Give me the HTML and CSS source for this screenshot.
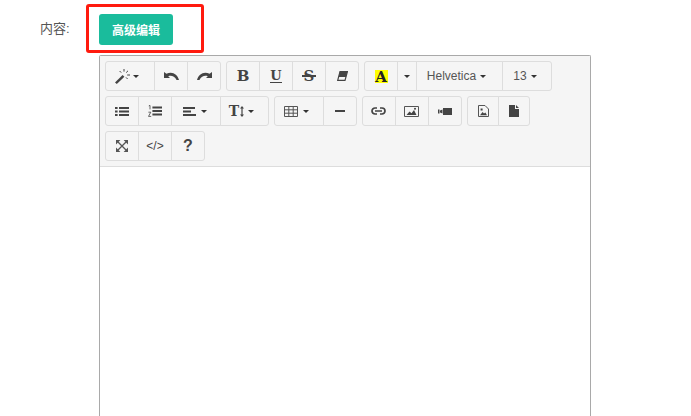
FILE: index.html
```html
<!DOCTYPE html>
<html lang="zh-CN">
<head>
    <meta charset="UTF-8">
    <title>高级编辑</title>
    <link rel="stylesheet" href="styles.css">
</head>
<body>
    <div class="form-row">
        <label class="form-label">内容:</label>
        <div class="form-field">
            <div class="btn-line">
                <button class="btn-primary">高级编辑</button>
            </div>
            <div class="editor">
                <div class="toolbar">
                    <div class="tool-row">
                        <div class="btn-group">
                            <button class="tool w49 nudge">
                                <svg width="15" height="15" viewBox="0 0 15 15"><path d="M0 13.4 L7.6 6 L9.4 7.8 L1.8 15 Z" fill="#444"/><path d="M9 0v2.6M13 1.8l-1.8 1.8M15 6h-2.8M4.6 2l1.6 1.6M12.6 10l-1.6-1.6" stroke="#444" stroke-width="1" fill="none"/></svg>
                                <span class="caret"></span>
                            </button>
                            <button class="tool">
                                <svg width="15" height="8" viewBox="0 0 15 8"><path d="M0 0 V6 H6 L4.2 4.2 C7 3 10.5 4 12.6 8 L15 8 C13.4 2 8 -1.2 2.4 1.8 Z" fill="#444"/></svg>
                            </button>
                            <button class="tool">
                                <svg width="15" height="8" viewBox="0 0 15 8"><path d="M15 0 V6 H9 L10.8 4.2 C8 3 4.5 4 2.4 8 L0 8 C1.6 2 7 -1.2 12.6 1.8 Z" fill="#444"/></svg>
                            </button>
                        </div>
                        <div class="btn-group">
                            <button class="tool"><span class="glyph-serif">B</span></button>
                            <button class="tool"><span class="glyph-under">U</span></button>
                            <button class="tool"><span class="glyph-strike">S</span></button>
                            <button class="tool">
                                <svg width="11" height="10" viewBox="0 0 11 10"><path d="M3 .6 H10.4 L8 9.4 H.7 Z" fill="none" stroke="#444" stroke-width="1.2"/><path d="M3 .6 H10.4 L9 6 H1.6 Z" fill="#444"/></svg>
                            </button>
                        </div>
                        <div class="btn-group">
                            <button class="tool"><span class="glyph-color">A</span></button>
                            <button class="tool w19"><span class="caret caret-solo"></span></button>
                            <button class="tool w86 nudge">Helvetica <span class="caret caret-text"></span></button>
                            <button class="tool w49 nudge-s">13 <span class="caret caret-text"></span></button>
                        </div>
                    </div>
                    <div class="tool-row">
                        <div class="btn-group">
                            <button class="tool">
                                <svg width="14" height="9" viewBox="0 0 14 9"><path d="M0 0h2.6v2H0zM0 3.5h2.6v2H0zM0 7h2.6v2H0zM4 0H14v2H4zM4 3.5H14v2H4zM4 7H14v2H4z" fill="#444"/></svg>
                            </button>
                            <button class="tool">
                                <svg width="14" height="12" viewBox="0 0 14 12"><path d="M4.4 1.6H14v2H4.4zM4.4 5H14v2H4.4zM4.4 8.4H14v2H4.4z" fill="#444"/><path d="M.8 .9l1.2-.5v4M.4 7.2h2.4L.5 11.4h2.7" fill="none" stroke="#444" stroke-width=".8"/></svg>
                            </button>
                            <button class="tool w49 nudge-xs">
                                <svg width="13" height="9" viewBox="0 0 13 9"><path d="M0 0h12v2H0zM0 3.5h8v2H0zM0 7h13v2H0z" fill="#444"/></svg>
                                <span class="caret caret-wide"></span>
                            </button>
                            <button class="tool w48 nudge">
                                <span class="glyph-size">T</span>
                                <svg class="size-arrow" width="4" height="11" viewBox="0 0 4 11"><path d="M2 0 L4 2.4H2.6V8.6H4L2 11 0 8.6H1.4V2.4H0Z" fill="#444"/></svg>
                                <span class="caret"></span>
                            </button>
                        </div>
                        <div class="btn-group">
                            <button class="tool w49 nudge">
                                <svg width="14" height="11" viewBox="0 0 14 11"><path d="M.5 .5h13v10H.5zM.5 3.8h13M.5 7.2h13M4.8 .5v10M9.2 .5v10" fill="none" stroke="#555" stroke-width="1"/></svg>
                                <span class="caret caret-wide"></span>
                            </button>
                            <button class="tool">
                                <svg width="10" height="2" viewBox="0 0 10 2"><path d="M0 0h10v2H0z" fill="#444"/></svg>
                            </button>
                        </div>
                        <div class="btn-group">
                            <button class="tool nudge-xs">
                                <svg width="15" height="8" viewBox="0 0 15 8"><path d="M6 1H4a3 3 0 0 0 0 6h2M9 1h2a3 3 0 0 1 0 6H9M4 4h7" fill="none" stroke="#444" stroke-width="1.7"/></svg>
                            </button>
                            <button class="tool nudge-xs">
                                <svg width="15" height="11" viewBox="0 0 15 11"><path d="M.5 .5h14v10H.5z" fill="none" stroke="#555" stroke-width="1"/><path d="M2.5 9 L5.5 5.5 L7.5 7.2 L10 4 L12.5 9 Z" fill="#444"/><circle cx="11" cy="2.8" r="1" fill="#444"/></svg>
                            </button>
                            <button class="tool">
                                <svg width="14" height="7" viewBox="0 0 14 7"><path d="M5 0h9v7H5zM0 1.6h1.5v3.8H0zM2 2.6l2.5-1v3.8L2 4.4z" fill="#444"/></svg>
                            </button>
                        </div>
                        <div class="btn-group">
                            <button class="tool w31">
                                <svg width="11" height="12" viewBox="0 0 11 12"><path d="M.5 .5h6.5l3.5 3.5v7.5H.5z" fill="none" stroke="#555" stroke-width="1"/><path d="M2 10.2 L4.6 7 L6 8.5 L7.4 7.4 L9 10.2Z M2.6 3.6h2v2h-2z" fill="#444"/></svg>
                            </button>
                            <button class="tool w31">
                                <svg width="10" height="12" viewBox="0 0 10 12"><path d="M0 0h6v4h4v8H0zM7 0l3 3H7z" fill="#444"/></svg>
                            </button>
                        </div>
                    </div>
                    <div class="tool-row">
                        <div class="btn-group">
                            <button class="tool">
                                <svg width="12" height="12" viewBox="0 0 12 12"><path d="M0 0h4.4L0 4.4zM12 0v4.4L7.6 0zM0 12V7.6L4.4 12zM12 12H7.6L12 7.6z" fill="#555"/><path d="M2 2l8 8M10 2l-8 8" stroke="#555" stroke-width="1.3" fill="none"/></svg>
                            </button>
                            <button class="tool"><span class="glyph-code">&lt;/&gt;</span></button>
                            <button class="tool"><span class="glyph-help">?</span></button>
                        </div>
                    </div>
                </div>
            </div>
        </div>
    </div>
    <div class="highlight"></div>
</body>
</html>
```

FILE: styles.css
```css
body {
    margin: 0;
    background: #fff;
    color: #333;
    font-family: "Liberation Sans", "Noto Sans CJK SC", sans-serif;
    font-size: 13px;
    height: 416px;
    overflow: hidden;
    position: relative;
}

.form-row {
    display: flex;
    height: 416px;
    overflow: hidden;
}

.form-label {
    width: 99px;
    box-sizing: border-box;
    padding: 21px 0 0 40px;
    font-size: 13px;
    line-height: 16px;
    color: #555;
}

.form-field {
    width: 492px;
}

.btn-line {
    padding-top: 14px;
    height: 55px;
    box-sizing: border-box;
}

.btn-primary {
    display: block;
    width: 74px;
    height: 31px;
    padding: 0;
    border: 0;
    border-radius: 3px;
    background: #1abc9c;
    color: #fff;
    font-family: inherit;
    font-size: 12px;
    font-weight: bold;
}

.editor {
    border: 1px solid #a9a9a9;
    border-bottom: 0;
    border-radius: 2px 2px 0 0;
    height: 361px;
    box-sizing: border-box;
}

.toolbar {
    background: #f5f5f5;
    border-bottom: 1px solid #ddd;
    padding: 0 5px 5px;
}

.tool-row {
    display: flex;
    gap: 5px;
    padding-top: 5px;
}

.btn-group {
    display: flex;
}

.tool {
    display: flex;
    align-items: center;
    justify-content: center;
    width: 34px;
    height: 30px;
    margin-left: -1px;
    padding: 0;
    border: 1px solid #ddd;
    background: #f5f5f5;
    color: #555;
    font-family: inherit;
    font-size: 12px;
}

.btn-group .tool:first-child {
    margin-left: 0;
    border-radius: 3px 0 0 3px;
}

.btn-group .tool:last-child {
    border-radius: 0 3px 3px 0;
}

.w19 { width: 20px; }
.w31 { width: 32px; }
.w48 { width: 49px; }
.w49 { width: 50px; }
.w86 { width: 87px; }

.nudge { padding-right: 6px; }
.nudge-s { padding-right: 4px; }
.nudge-xs { padding-right: 2px; }

.caret {
    display: inline-block;
    margin-left: 3px;
    border-top: 3px solid #333;
    border-left: 3px solid transparent;
    border-right: 3px solid transparent;
}

.caret-solo {
    margin-left: 0;
}

.caret-text {
    margin-left: 4px;
}

.caret-wide {
    margin-left: 5px;
}

.glyph-serif,
.glyph-under,
.glyph-strike,
.glyph-color,
.glyph-size {
    font-family: "DejaVu Serif", serif;
    font-weight: bold;
    color: #444;
    line-height: 1;
}

.glyph-serif { font-size: 15px; }

.glyph-under {
    font-size: 13px;
    border-bottom: 1px solid #444;
}

.glyph-strike {
    font-size: 15px;
    position: relative;
}

.glyph-strike::after {
    content: "";
    position: absolute;
    left: -2px;
    right: -2px;
    top: 6px;
    height: 2px;
    background: #444;
}

.glyph-color {
    font-size: 15px;
    background: #ff0;
    color: #222;
    width: 13px;
    height: 13px;
    line-height: 14px;
}

.glyph-size {
    font-size: 14px;
}

.size-arrow {
    margin: 0 1px;
}

.glyph-code {
    font-size: 12px;
    color: #444;
}

.glyph-help {
    font-size: 16px;
    font-weight: bold;
    color: #444;
}

.highlight {
    position: absolute;
    left: 86px;
    top: 4px;
    width: 112px;
    height: 43px;
    border: 3px solid #ff1a0e;
    border-radius: 3px;
}
```
